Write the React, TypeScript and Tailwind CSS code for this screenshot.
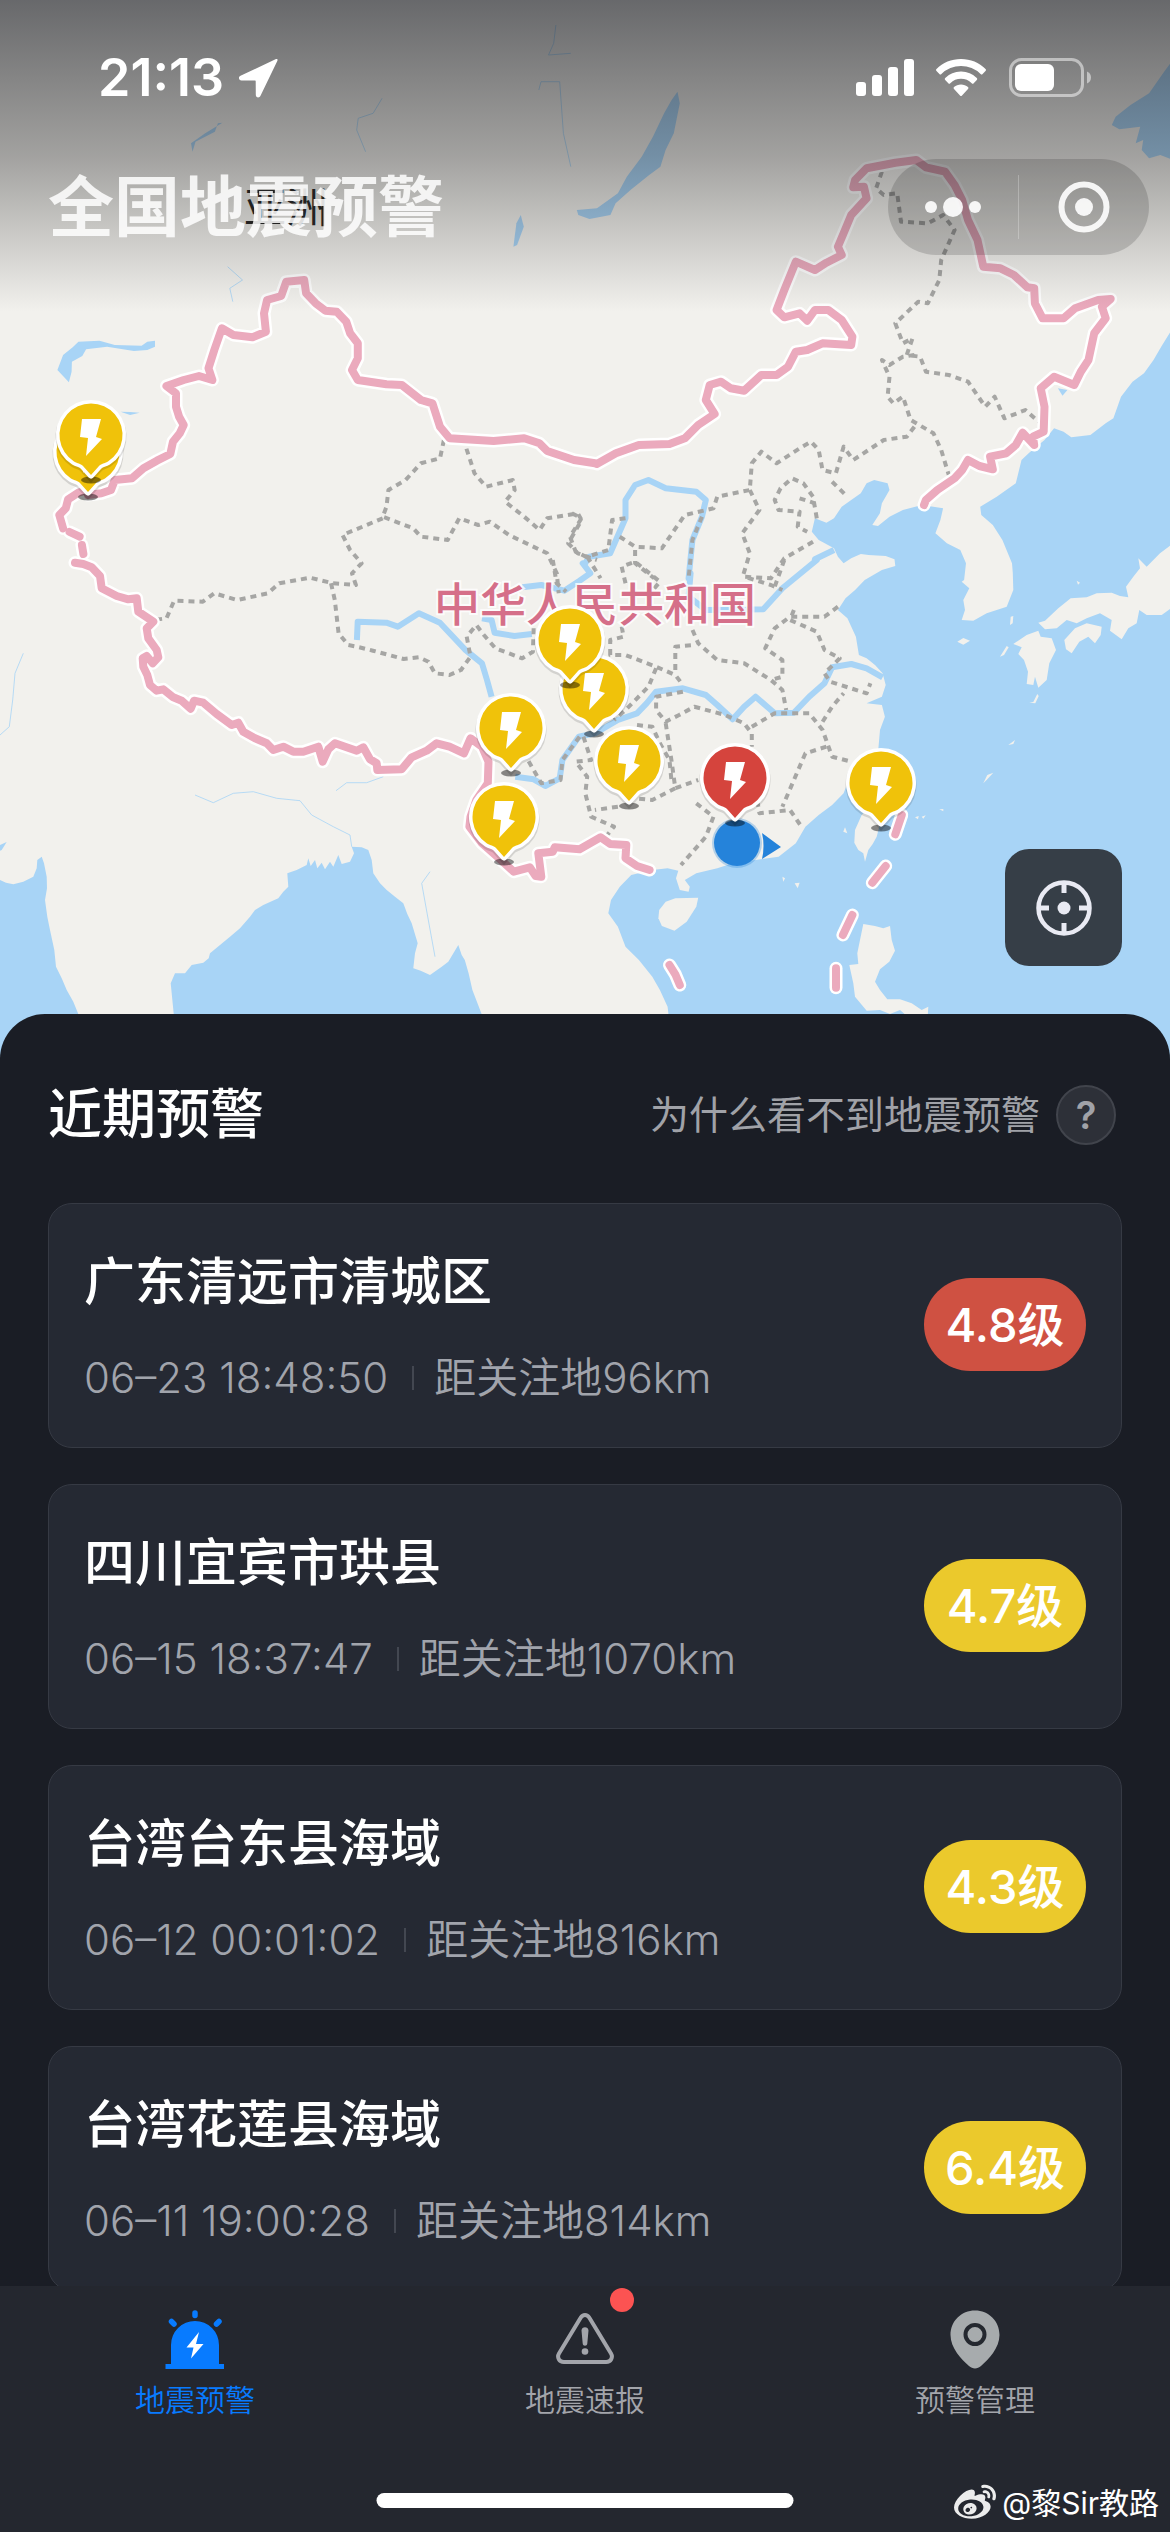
import React from "react";
import { FaWeibo } from "react-icons/fa";

const SANS = "font-['Inter','Noto_Sans_CJK_SC',sans-serif]";

/* ---------- map geometry ---------- */

type Tile = [x: number, y: number, sx: number, sy: number];

const NORTH: Tile = [0, 0, 0.7462, 1 / 3];
const WEST: Tile = [0, 250, 0.38265, 1 / 3];
const NORTHEAST: Tile = [570, 130, 0.38265, 1 / 3];
const CENTRE: Tile = [350, 560, 0.38265, 1 / 3];
const SOUTHWEST: Tile = [0, 560, 1 / 3, 1 / 3];
const EAST: Tile = [800, 560, 1 / 3, 1 / 3];
const PAGE: Tile = [0, 0, 1, 1];

/** Projects tile-local "x,y x,y ..." points to map coordinates. */
function pts([x, y, sx, sy]: Tile, list: string) {
  return list
    .trim()
    .split(/\s+/)
    .map((p) => {
      const [a, b] = p.split(",").map(Number);
      return `${Math.round((x + a * sx) * 10) / 10},${Math.round((y + b * sy) * 10) / 10}`;
    })
    .join(" ");
}

const SEAS = [
  pts(SOUTHWEST, "-5,958 18,968 40,973 70,965 100,950 110,925 112,900 125,890 132,910 140,950 141,985 135,1020 142,1070 150,1110 163,1170 168,1220 185,1255 200,1290 220,1325 235,1362 240,1560 -5,1560"),
  pts(SOUTHWEST, "525,1560 522,1370 512,1270 525,1240 555,1240 575,1215 610,1208 626,1195 630,1180 660,1155 690,1130 720,1105 750,1070 765,1050 790,1035 835,1015 850,995 865,980 862,940 890,930 920,915 925,895 932,918 945,900 952,925 965,908 975,928 990,905 1000,920 1015,885 1025,912 1050,905 1062,880 1055,860 1085,862 1105,870 1115,900 1120,940 1140,970 1160,990 1185,1010 1210,1030 1222,1062 1235,1090 1253,1150 1245,1180 1240,1225 1262,1232 1290,1245 1325,1220 1345,1205") +
    " " + pts(CENTRE, "283,1155 292,1185 300,1200 310,1240 320,1290 345,1365 345,1480"),
  pts(CENTRE, "838,1480 835,1390 830,1340 810,1290 790,1250 755,1200 720,1160 700,1100 675,1060 682,1020 705,980 735,945 790,930 830,925 858,932 852,955 862,990 885,995 888,980 875,960 905,940 960,925 1000,910 1060,900 1120,890 1165,850 1190,800 1225,765 1260,735 1290,700 1310,640 1340,600 1380,575 1385,510 1398,470 1390,435 1350,430 1390,410 1400,375 1392,340 1372,315 1350,295 1330,285 1322,230 1310,200 1300,175 1275,150 1295,115 1320,90 1345,60 1390,30") +
    " " + pts(NORTHEAST, "850,1308 848,1288 825,1278 780,1275 760,1272 735,1285 715,1300 700,1280 690,1255 650,1230 632,1205 640,1165 670,1178 690,1165 710,1130 735,1110 760,1090 775,1060 795,1050 830,1060 835,1080 815,1120 810,1150 790,1185 805,1188 835,1160 870,1140 920,1125 975,1135 968,1170 955,1210 985,1240 1020,1260 1035,1300 1030,1350") +
    " " + pts(EAST, "485,65 508,85 490,120 495,150 485,180 520,182 560,160 620,140 640,90 638,30") +
    " " + pts(NORTHEAST, "1158,1340 1155,1300 1130,1230 1105,1185 1075,1155 1072,1130 1115,1100 1165,1060 1180,990 1200,968 1240,930 1265,895 1290,905 1310,922 1360,915 1400,880 1420,865 1440,800 1470,755 1500,730 1525,690 1545,650 1572,600") +
    " " + pts(PAGE, "1175,1090 671,1090"),
  pts(NORTH, "1575,170 1560,215 1540,280 1515,315 1495,350 1490,375 1500,388 1528,380 1522,430 1532,420 1530,450 1540,475 1555,465 1575,482"),
];

const LAKES = [
  pts(NORTH, "908,275 900,300 890,340 875,410 860,470 840,530 828,580 800,625 773,630 775,645 790,657 818,645 825,610 845,570 870,525 885,500 892,450 903,400 911,310"),
  pts(NORTH, "698,645 692,670 688,740 693,735 702,680"),
  pts(NORTH, "292,370 288,395 262,425 258,455 256,430 275,400 298,368"),
  pts(WEST, "150,360 180,397 187,365 188,335 215,318 225,298 280,290 350,303 385,300 405,290 405,272 385,275 370,287 300,285 260,272 205,275 190,292 165,315"),
  pts(WEST, "315,485 340,486 365,488 340,495"),
  pts(NORTHEAST, "1275,775 1300,780 1287,797"),
  pts(SOUTHWEST, "0,855 20,846 5,870 0,872"),
];

const ISLANDS = [
  pts(CENTRE, "808,1050 825,1025 850,1015 910,1013 905,1040 880,1085 848,1112 815,1098 806,1075"),
  pts(EAST, "205,745 185,765 165,810 163,848 175,870 190,880 195,905 205,870 218,852 230,830 245,770"),
  pts(EAST, "190,1092 225,1098 250,1105 270,1098 275,1140 285,1172 268,1205 240,1228 225,1265 240,1290 262,1318 300,1318 335,1330 365,1350 385,1340 380,1420 300,1350 270,1362 240,1350 200,1352 165,1310 160,1270 148,1215 175,1212 172,1180 180,1140"),
  pts(EAST, "472,245 490,234 510,242 490,254"),
  pts(EAST, "640,252 680,225 715,212 722,230 755,235 768,270 748,310 740,360 715,383 705,350 700,375 680,372 684,335 672,300 655,282 665,262"),
  pts(EAST, "793,240 825,205 860,190 905,200 902,225 885,250 865,230 838,245 815,280 798,268"),
  pts(EAST, "715,188 735,182 775,145 812,115 860,112 890,100 935,98 960,108 985,112 978,80 1000,50 1020,25 1015,-5 1040,20 1080,-20 1120,-50 1120,140 1085,165 1040,165 1018,150 1010,190 985,205 965,238 930,212 935,180 900,160 860,175 830,190 800,180 770,205 735,208"),
  pts(EAST, "625,555 645,540 640,552"),
  pts(EAST, "550,670 562,645 580,638 562,658"),
  pts(EAST, "630,195 632,170 640,168 638,190"),
  pts(EAST, "600,290 620,258 626,262 612,285"),
  pts(EAST, "688,428 700,426 712,402 716,408 706,430"),
  pts(EAST, "130,815 135,802 142,820"),
  pts(EAST, "345,772 356,768 354,778"),
  pts(EAST, "365,770 377,766 370,776"),
  pts(EAST, "418,748 430,747 430,754"),
  pts(EAST, "830,62 840,68 834,74"),
  pts(CENTRE, "1162,970 1175,968 1170,985"),
  pts(CENTRE, "1130,950 1137,955 1132,965"),
];

const BORDER = [
  pts(WEST, "230,735 265,730 290,720 300,690 345,685 375,655 410,632 445,612 452,575 470,550 480,525 468,500 460,470 460,430 435,408 480,390 520,378 555,390 545,355 560,300 580,235 610,255 660,262 695,245 690,190 698,150 735,138 748,95 795,90 800,130 825,160 850,182 880,185 905,215 915,250 935,280 935,325 920,360 935,390 1010,403 1050,405 1100,450 1130,460 1150,530 1175,565 1290,573 1370,565 1410,580 1430,603 1500,630 1555,640") +
    " " + pts(NORTHEAST, "70,1002 120,970 180,945 260,942 300,925 335,885 378,852 355,810 365,765 395,755 420,775 455,782 500,735 540,735 570,710 590,665 620,660 660,640 735,645 738,620 710,570 675,540 640,540 620,572 600,550 560,562 540,540 560,480 590,395 640,420 670,398 710,375 700,350 715,310 735,255 775,205 768,170 740,172 745,150 775,115 850,98 905,90 930,112 980,125 1005,165 1025,210 1040,270 1065,330 1080,410 1125,415 1160,435 1195,472 1213,475 1215,520 1235,565 1290,565 1320,535 1380,510 1413,507 1390,530 1400,565 1370,610 1355,690 1335,725 1318,765 1265,740 1230,775 1240,830 1238,905 1210,920 1213,945 1183,908 1165,945 1140,970 1098,980 1105,1018 1070,1008 1040,990 1025,1020 1005,1045 960,1080 930,1110 925,1125"),
  pts(WEST, "230,720 205,728 178,748 172,775 155,795 165,835"),
  pts(WEST, "182,846 208,860"),
  pts(WEST, "214,885 218,912"),
  pts(SOUTHWEST, "225,8 250,12 275,22 300,48 305,85 350,108 385,118 410,115 415,155 460,185 440,205 445,235 470,270 475,292 458,310 440,288 428,295 430,320 442,345 450,375 470,392 490,388 520,412 545,422 572,446 582,422 610,428 650,462 695,495 715,488 730,515 765,535 800,550 820,570 850,560 880,575 910,575 955,560 968,605 985,568 1005,550 1070,572 1090,562 1110,598 1130,610 1132,630 1205,628 1235,592 1280,572 1310,550") +
    " " + pts(CENTRE, "260,560 298,580 315,535 345,560 362,605 360,670 330,720 315,770 312,800 345,850 385,890 428,935 470,922 485,948 500,950 492,880 530,875 535,862 600,868 655,832 680,852 722,855 720,895 750,918 783,930"),
  pts(CENTRE, "1442,765 1425,823"),
  pts(CENTRE, "1400,918 1365,968"),
  pts(CENTRE, "1313,1065 1288,1125"),
  pts(CENTRE, "1270,1225 1270,1283"),
  pts(CENTRE, "835,1215 850,1243 862,1275"),
];

const RIVERS = [
  pts(CENTRE, "18,240 20,185 95,188 125,200 180,160 235,188 300,268 345,310 358,360 370,410"),
  pts(CENTRE, "432,650 480,658 510,678 548,655 555,600 598,530 640,520 700,480 750,460 775,430 800,395 870,385 930,405 960,435 1000,478 1030,440 1060,410 1110,460 1160,458 1200,410 1240,370 1260,322 1310,312 1350,325 1392,352"),
  pts(CENTRE, "345,175 370,180 378,218 430,228 475,222"),
  pts(CENTRE, "450,82 500,75 560,92 600,62 628,40 608,10") + " " + pts(NORTHEAST, "40,1300 50,1280 105,1270 145,1165 145,1110 170,1065 205,1050 250,1075 330,1085 355,1110 345,1160 320,1230 310,1345") + " " + pts(CENTRE, "890,40 885,110 930,150 1080,148 1130,85 1220,0") + " " + pts(NORTHEAST, "640,1288 690,1260"),
];

const STREAMS = [
  pts(SOUTHWEST, "0,525 28,500 38,420 45,340 70,280"),
  pts(SOUTHWEST, "585,705 640,728 700,700 760,695 830,715 900,722 935,765 1000,800 1050,825 1055,860"),
  pts(SOUTHWEST, "1008,692 1040,668 1100,668 1150,650"),
  pts(SOUTHWEST, "1290,935 1265,970 1285,1080 1305,1190"),
  pts(NORTH, "745,75 742,130 735,165 765,160"),
  pts(NORTH, "722,270 725,245 750,245 755,400 765,500"),
  pts(NORTH, "512,295 500,340 480,355 478,390 490,455"),
  pts(NORTH, "305,800 325,840 308,865 312,905"),
];

const PROVINCES = [
  pts(WEST, "1160,570 1150,625 1100,640 1060,690 1015,720 1010,770 1000,800 1080,835 1100,860 1170,870 1200,805 1250,825 1280,815 1330,855 1430,910 1455,970 1460,1030"),
  pts(WEST, "1210,565 1240,670 1270,710 1340,690 1345,720 1320,755 1370,800 1410,840 1430,805 1510,790 1520,810 1485,880 1510,910 1560,930"),
  pts(WEST, "1000,805 895,855 915,900 945,940 920,970 930,1005 870,1000 810,983 730,1000 700,1030 620,1050 560,1030 530,1055 455,1052 435,1105 400,1110"),
  pts(WEST, "865,1000 875,1050 885,1150 910,1185") + " " + pts(CENTRE, "18,260 60,272 140,297 180,292 205,305 222,340 260,345 290,330 315,290 305,230 330,195 350,225 380,265 450,295 478,275 480,200"),
  pts(NORTHEAST, "815,125 800,175 820,195 855,190 865,275 935,280 975,255 1005,300 970,390 965,450 935,520 910,515 850,580 870,640 895,625 880,675 915,680 930,725 990,735 1040,755 1085,830 1110,800 1135,865 1190,840 1225,875"),
  pts(NORTHEAST, "900,675 870,680 835,705 815,690 835,740 830,800 845,820 870,800 890,870 950,910 970,960 990,1035"),
  pts(NORTHEAST, "900,890 880,920 820,930 740,990 715,950 695,1030 660,1020 650,960 630,935 600,955 540,1000 500,965 475,1000 470,1080 385,1100 375,1135 300,1155 240,1255 170,1250 130,1220"),
  pts(NORTHEAST, "685,1055 725,1100"),
  pts(NORTHEAST, "645,1165 635,1100 610,1060 580,1045 550,1075 535,1110 545,1140 600,1145 595,1190 620,1205"),
  pts(NORTHEAST, "600,1105 640,1120"),
  pts(NORTHEAST, "470,1080 495,1140 450,1210 470,1270 450,1345"),
  pts(NORTHEAST, "635,1235 560,1285 525,1345") + " " + pts(CENTRE, "1030,50 1100,75 1130,90"),
  pts(NORTHEAST, "145,1165 110,1170 100,1260 45,1280 80,1345"),
  pts(NORTHEAST, "170,1260 170,1300 220,1345"),
  pts(NORTHEAST, "345,1160 320,1230 310,1345"),
  pts(NORTHEAST, "5,1150 30,1165 0,1220 15,1265 50,1285"),
  pts(CENTRE, "530,0 540,70 565,95"),
  pts(CENTRE, "720,70 710,20 745,5 810,65 770,120"),
  pts(CENTRE, "1135,0 1110,80"),
  pts(CENTRE, "1275,140 1240,170 1150,170 1110,205 1085,265 1130,300 1130,350 1100,360"),
  pts(CENTRE, "1160,150 1150,180 1220,215 1240,270 1280,295 1240,340 1255,365 1350,400 1360,370"),
  pts(CENTRE, "895,210 910,250 960,300 1030,310 1100,360 1130,390 1140,450"),
  pts(CENTRE, "710,200 715,230 680,240 680,285 720,285 800,320 850,345 870,375"),
  pts(CENTRE, "850,330 850,260 900,255"),
  pts(CENTRE, "800,325 780,380 720,450 690,480"),
  pts(CENTRE, "870,395 800,410 800,450 825,485 860,465 900,440 980,465 1030,490 1050,520 1050,560"),
  pts(CENTRE, "1050,500 1110,460 1200,460 1235,510 1260,590 1310,605"),
  pts(CENTRE, "1235,485 1260,440 1290,400"),
  pts(CENTRE, "1245,560 1190,580 1160,660 1130,740"),
  pts(CENTRE, "750,495 790,500 810,550 835,600 840,660"),
  pts(CENTRE, "825,490 840,600 850,685 910,660"),
  pts(CENTRE, "850,685 790,720 740,715"),
  pts(CENTRE, "610,530 630,600 590,605 620,650 615,700 630,770 690,800 665,835"),
  pts(CENTRE, "600,530 555,600 550,660 500,670 465,600"),
  pts(CENTRE, "700,740 640,750"),
  pts(CENTRE, "905,730 950,770 930,830 865,915"),
  pts(CENTRE, "1060,690 1070,760 1150,750 1180,800"),
];

const PINS = [
  { x: 88, y: 496, color: "#f0c20a" },
  { x: 91, y: 479, color: "#f0c20a" },
  { x: 594, y: 733, color: "#f0c20a" },
  { x: 570, y: 684, color: "#f0c20a" },
  { x: 511, y: 772, color: "#f0c20a" },
  { x: 629, y: 805, color: "#f0c20a" },
  { x: 504, y: 861, color: "#f0c20a" },
  { x: 735, y: 822, color: "#d5443d" },
  { x: 881, y: 827, color: "#f0c20a" },
];

const PIN_SHAPE = "M0,-4 L-8,-13 C-11,-16 -13,-15 -17,-17.5 A31.5 31.5 0 1 1 17,-17.5 C13,-15 11,-16 8,-13 Z";

function Pin({ x, y, color }: { x: number; y: number; color: string }) {
  return (
    <g transform={`translate(${x} ${y})`}>
      <ellipse cx="0" cy="1" rx="10" ry="3.5" fill="#000" opacity="0.45" />
      <path d={PIN_SHAPE} fill="#000" opacity="0.12" stroke="#000" strokeWidth="8" transform="translate(0 2)" />
      <path d={PIN_SHAPE} fill={color} stroke="#fff" strokeWidth="7" strokeLinejoin="round" paintOrder="stroke" />
      <path d="M-9,-60 H10 L5,-42 L11,-40 L-5,-23 L-3,-41 L-11,-42 Z" fill="#fff" />
    </g>
  );
}

function MapView() {
  return (
    <svg
      className="absolute inset-0 h-full w-full"
      viewBox="0 0 1170 1062"
      preserveAspectRatio="xMidYMin slice"
      role="img"
      aria-label="地震预警地图"
    >
      <defs>
        <linearGradient id="shade" x1="0" y1="0" x2="0" y2="1">
          <stop offset="0" stopColor="#1a1c22" stopOpacity="0.64" />
          <stop offset="0.5" stopColor="#1a1a1c" stopOpacity="0.37" />
          <stop offset="1" stopColor="#1a1a1c" stopOpacity="0" />
        </linearGradient>
      </defs>
      <rect width="1170" height="1062" fill="#f2f1ed" />
      <g fill="#a8d4f6">
        {SEAS.map((p) => <polygon key={p} points={p} />)}
        {LAKES.map((p) => <polygon key={p} points={p} />)}
      </g>
      <g fill="#f2f1ed">
        {ISLANDS.map((p) => <polygon key={p} points={p} />)}
      </g>
      <g fill="none" stroke="#a8d4f6" strokeLinejoin="round">
        {RIVERS.map((p) => <polyline key={p} points={p} strokeWidth="6" />)}
        {STREAMS.map((p) => <polyline key={p} points={p} strokeWidth="1" opacity="0.8" />)}
      </g>
      <g fill="none" stroke="#a6a6a4" strokeWidth="4" strokeDasharray="6 5" strokeLinejoin="round">
        {PROVINCES.map((p) => <polyline key={p} points={p} />)}
      </g>
      <g fill="none" strokeLinecap="round" strokeLinejoin="round">
        {BORDER.map((p) => <polyline key={p} points={p} stroke="#fff" strokeWidth="13" />)}
        {BORDER.map((p) => <polyline key={p} points={p} stroke="#ebaabd" strokeWidth="8" />)}
      </g>
      <rect width="1170" height="312" fill="url(#shade)" />
      <text x="244" y="223" fontSize="42" fill="#222" fontFamily="'Noto Sans CJK SC', sans-serif">亚洲</text>
      <text
        x="434"
        y="621"
        fontSize="46"
        fontWeight="500"
        fill="#d56f89"
        stroke="#fff"
        strokeOpacity="0.8"
        strokeWidth="4"
        paintOrder="stroke"
        fontFamily="'Noto Sans CJK SC', sans-serif"
      >
        中华人民共和国
      </text>
      {PINS.slice(0, 7).map((p) => <Pin key={`${p.x}-${p.y}`} {...p} />)}
      <circle cx="737" cy="843" r="25" fill="#2583da" opacity="0.3" />
      <circle cx="737" cy="843" r="23" fill="#2583da" />
      <path d="M762,833 L781,847 L762,859 Q765,846 762,833 Z" fill="#2583da" />
      {PINS.slice(7).map((p) => <Pin key={`${p.x}-${p.y}`} {...p} />)}
    </svg>
  );
}

/* ---------- chrome ---------- */

function StatusBar() {
  return (
    <div className="flex h-[156px] items-center justify-between pr-[78px] pl-[98px] text-white">
      <div className="flex items-center gap-[14px]">
        <span className="text-[52px] leading-none font-semibold">21:13</span>
        <svg width="40" height="40" viewBox="0 0 40 40" aria-hidden="true">
          <path d="M37.5 1.2 2.5 17.8c-2.6 1.3-1.8 4.6 1 4.7l13.600.1c.4 0 .6.2.6.6l.1 13.500c0 3 3.500 3.700 4.700 1L39.300 3c.9-2-.2-2.500-1.800-1.800Z" fill="#fff" />
        </svg>
      </div>
      <div className="flex items-center gap-[22px]">
        <svg width="58" height="40" viewBox="0 0 58 40" fill="#fff" aria-hidden="true">
          <rect x="0" y="24" width="10" height="14" rx="3" />
          <rect x="16" y="17" width="10" height="21" rx="3" />
          <rect x="32" y="9" width="10" height="29" rx="3" />
          <rect x="48" y="1" width="10" height="37" rx="3" />
        </svg>
        <svg width="50" height="40" viewBox="0 0 50 40" fill="#fff" aria-hidden="true">
          <path d="M25 1C15.500 1 6.800 4.700.5 10.900a1.400 1.400 0 0 0 0 2L3.400 15.900a1.400 1.400 0 0 0 2 0A28 28 0 0 1 44.600 15.900a1.400 1.400 0 0 0 2 0L49.500 12.900a1.400 1.400 0 0 0 0-2C43.200 4.700 34.500 1 25 1Z" />
          <path d="M25 13.600a22 22 0 0 0-15.800 6.500 1.400 1.400 0 0 0 0 2l3.100 3.100a1.400 1.400 0 0 0 2 0 15.300 15.300 0 0 1 21.400 0 1.400 1.400 0 0 0 2 0l3.100-3.100a1.400 1.400 0 0 0 0-2A22 22 0 0 0 25 13.600Z" />
          <path d="M25 26.500c-2.700 0-5.100.9-7 2.500a1.400 1.400 0 0 0 0 2l6 6.500a1.400 1.400 0 0 0 2 0l6-6.500a1.400 1.400 0 0 0 0-2c-1.900-1.600-4.300-2.500-7-2.500Z" />
        </svg>
        <svg width="84" height="40" viewBox="0 0 84 40" aria-hidden="true">
          <rect x="2.500" y="1.500" width="72" height="36" rx="11" fill="none" stroke="#fff" strokeOpacity="0.5" strokeWidth="3" />
          <rect x="7" y="6" width="39" height="27" rx="6" fill="#fff" />
          <path d="M79 13.500c2.500 1 4 3.300 4 6s-1.500 5-4 6Z" fill="#fff" fillOpacity="0.5" />
        </svg>
      </div>
    </div>
  );
}

function TitleBar() {
  return (
    <div className="flex items-center justify-between pt-[3px] pr-[21px] pl-[48px]">
      <h1 className="text-[66px] leading-[96px] font-bold text-white/85">全国地震预警</h1>
      <div className="flex h-[96px] w-[261px] items-center rounded-full bg-black/15">
        <button type="button" aria-label="更多" className="flex h-full flex-1 items-center justify-center">
          <svg width="60" height="24" viewBox="0 0 60 24" fill="#fff" fillOpacity="0.9" aria-hidden="true">
            <circle cx="8" cy="12" r="6" />
            <circle cx="30" cy="12" r="10" />
            <circle cx="52" cy="12" r="6" />
          </svg>
        </button>
        <span className="h-[64px] w-px bg-white/25" />
        <button type="button" aria-label="关闭" className="flex h-full flex-1 items-center justify-center">
          <svg width="52" height="52" viewBox="0 0 52 52" aria-hidden="true">
            <circle cx="26" cy="26" r="22.500" fill="none" stroke="#fff" strokeOpacity="0.9" strokeWidth="6" />
            <circle cx="26" cy="26" r="9" fill="#fff" fillOpacity="0.9" />
          </svg>
        </button>
      </div>
    </div>
  );
}

function LocateButton() {
  return (
    <button
      type="button"
      aria-label="定位"
      className="absolute right-[48px] bottom-[94px] flex h-[117px] w-[117px] items-center justify-center rounded-[24px] bg-[#363e47]"
    >
      <svg width="56" height="56" viewBox="0 0 56 56" fill="none" stroke="#e9eaf3" aria-hidden="true">
        <circle cx="28" cy="28" r="25.500" strokeWidth="4.500" />
        <path d="M28 3v10M28 43v10M3 28h10M43 28h10" strokeWidth="5" />
        <circle cx="28" cy="28" r="6.500" fill="#e9eaf3" stroke="none" />
      </svg>
    </button>
  );
}

/* ---------- warnings ---------- */

type Warning = { place: string; time: string; distance: string; level: string; severe?: boolean };

const WARNINGS: Warning[] = [
  { place: "广东清远市清城区", time: "06–23 18:48:50", distance: "距关注地96km", level: "4.8级", severe: true },
  { place: "四川宜宾市珙县", time: "06–15 18:37:47", distance: "距关注地1070km", level: "4.7级" },
  { place: "台湾台东县海域", time: "06–12 00:01:02", distance: "距关注地816km", level: "4.3级" },
  { place: "台湾花莲县海域", time: "06–11 19:00:28", distance: "距关注地814km", level: "6.4级" },
];

function WarningCard({ place, time, distance, level, severe }: Warning) {
  return (
    <li className="flex shrink-0 items-center justify-between rounded-[24px] border border-[#363a44] bg-[#252933] px-[35px] pt-[46px] pb-[41px]">
      <div>
        <h3 className="text-[51px] leading-[64px] font-medium text-white">{place}</h3>
        <p className="mt-[36px] flex items-center text-[42px] leading-[56px] font-[350] text-[#a1a4ac]">
          <span>{time}</span>
          <span className="mr-[20px] ml-[24px] h-[24px] w-[2px] bg-[#434751]" />
          <span>{distance}</span>
        </p>
      </div>
      <span
        className={`mb-[8px] flex h-[93px] w-[162px] items-center justify-center rounded-full text-[47px] leading-none font-medium text-white ${
          severe ? "bg-[#cf5142]" : "bg-[#ebc92c]"
        }`}
      >
        {level}
      </span>
    </li>
  );
}

/* ---------- tab bar ---------- */

function SirenIcon() {
  return (
    <svg width="60" height="60" viewBox="0 0 60 60" aria-hidden="true">
      <g stroke="#087bff" strokeWidth="5.500" strokeLinecap="round">
        <path d="M30 3v2.500M6.500 11.500l2.500 2.500M54 11.500l-2.500 2.500" />
      </g>
      <path d="M6 54V35a24 24 0 0 1 48 0v19h5v5H0.500v-5Z" fill="#087bff" />
      <path d="M34 22 21.500 37.500h7L26 48.500 38.500 34h-7.500Z" fill="#fff" />
    </svg>
  );
}

function AlertIcon() {
  return (
    <svg width="60" height="60" viewBox="0 0 60 60" fill="none" aria-hidden="true">
      <path d="M25.800 7.500 4 43.500c-2.300 4 .2 8.500 4.800 8.500h42.400c4.600 0 7.100-4.500 4.800-8.500L34.200 7.500c-2-3.400-6.400-3.400-8.400 0Z" stroke="#a3a5ab" strokeWidth="4" />
      <path d="M26.500 20.500c0-4.500 7-4.500 7 0l-1.200 13c-.2 3-4.400 3-4.600 0Z" fill="#a3a5ab" />
      <circle cx="30" cy="41.500" r="3.300" fill="#a3a5ab" />
    </svg>
  );
}

function PinIcon() {
  return (
    <svg width="60" height="60" viewBox="0 0 60 60" aria-hidden="true">
      <path d="M30 .5C16.500.5 5.500 11 5.500 25c0 13 11 24.500 18.500 31 3.600 3.200 8.400 3.200 12 0C43.500 49.500 54.500 38 54.500 25 54.500 11 43.500.5 30 .5Z" fill="#a7abad" />
      <circle cx="30" cy="24.500" r="9.500" fill="none" stroke="#24282f" strokeWidth="4" />
    </svg>
  );
}

function TabBar() {
  const tabs = [
    { label: "地震预警", icon: <SirenIcon />, active: true },
    { label: "地震速报", icon: <AlertIcon />, dot: true },
    { label: "预警管理", icon: <PinIcon /> },
  ];
  return (
    <nav className="relative h-[246px] shrink-0 bg-[#24272f]">
      <div className="grid grid-cols-3 pt-[24px]">
        {tabs.map((t) => (
          <button
            key={t.label}
            type="button"
            aria-current={t.active ? "page" : undefined}
            className="flex flex-col items-center gap-[10px]"
          >
            <span className="relative">
              {t.icon}
              {t.dot && <span className="absolute -top-[22px] -right-[19px] h-[24px] w-[24px] rounded-full bg-[#fc5352]" />}
            </span>
            <span className={`text-[30px] leading-[40px] font-[350] ${t.active ? "text-[#087bff]" : "text-[#a3a5ab]"}`}>
              {t.label}
            </span>
          </button>
        ))}
      </div>
      <div className="absolute bottom-[24px] left-1/2 h-[15px] w-[417px] -translate-x-1/2 rounded-full bg-white" />
      <p className="absolute right-[11px] bottom-[8px] flex items-center gap-[6px] text-[30px] leading-[40px] text-white">
        <FaWeibo size={42} color="#ececec" aria-hidden="true" />
        @黎Sir教路
      </p>
    </nav>
  );
}

export default function App() {
  return (
    <div className={`flex h-screen flex-col overflow-hidden bg-[#1a1d25] ${SANS}`}>
      <header className="relative h-[1060px] shrink-0 overflow-hidden">
        <MapView />
        <div className="relative">
          <StatusBar />
          <TitleBar />
        </div>
        <LocateButton />
      </header>

      <main className="relative -mt-[46px] flex min-h-0 flex-1 flex-col overflow-hidden rounded-t-[45px] bg-[#1a1d25] px-[48px] pt-[71px]">
        <div className="flex items-center justify-between">
          <h2 className="text-[54px] leading-[60px] font-medium text-white">近期预警</h2>
          <button type="button" className="flex items-center gap-[16px] pr-[6px] text-[39px] leading-[60px] text-[#a0a2a8]">
            为什么看不到地震预警
            <span className="flex h-[60px] w-[60px] items-center justify-center rounded-full border-2 border-[#41444c] bg-[#2d3038] text-[38px] leading-none font-semibold">
              ?
            </span>
          </button>
        </div>
        <ul className="mt-[58px] flex flex-col gap-[36px]">
          {WARNINGS.map((w) => (
            <WarningCard key={w.time} {...w} />
          ))}
        </ul>
      </main>

      <TabBar />
    </div>
  );
}
